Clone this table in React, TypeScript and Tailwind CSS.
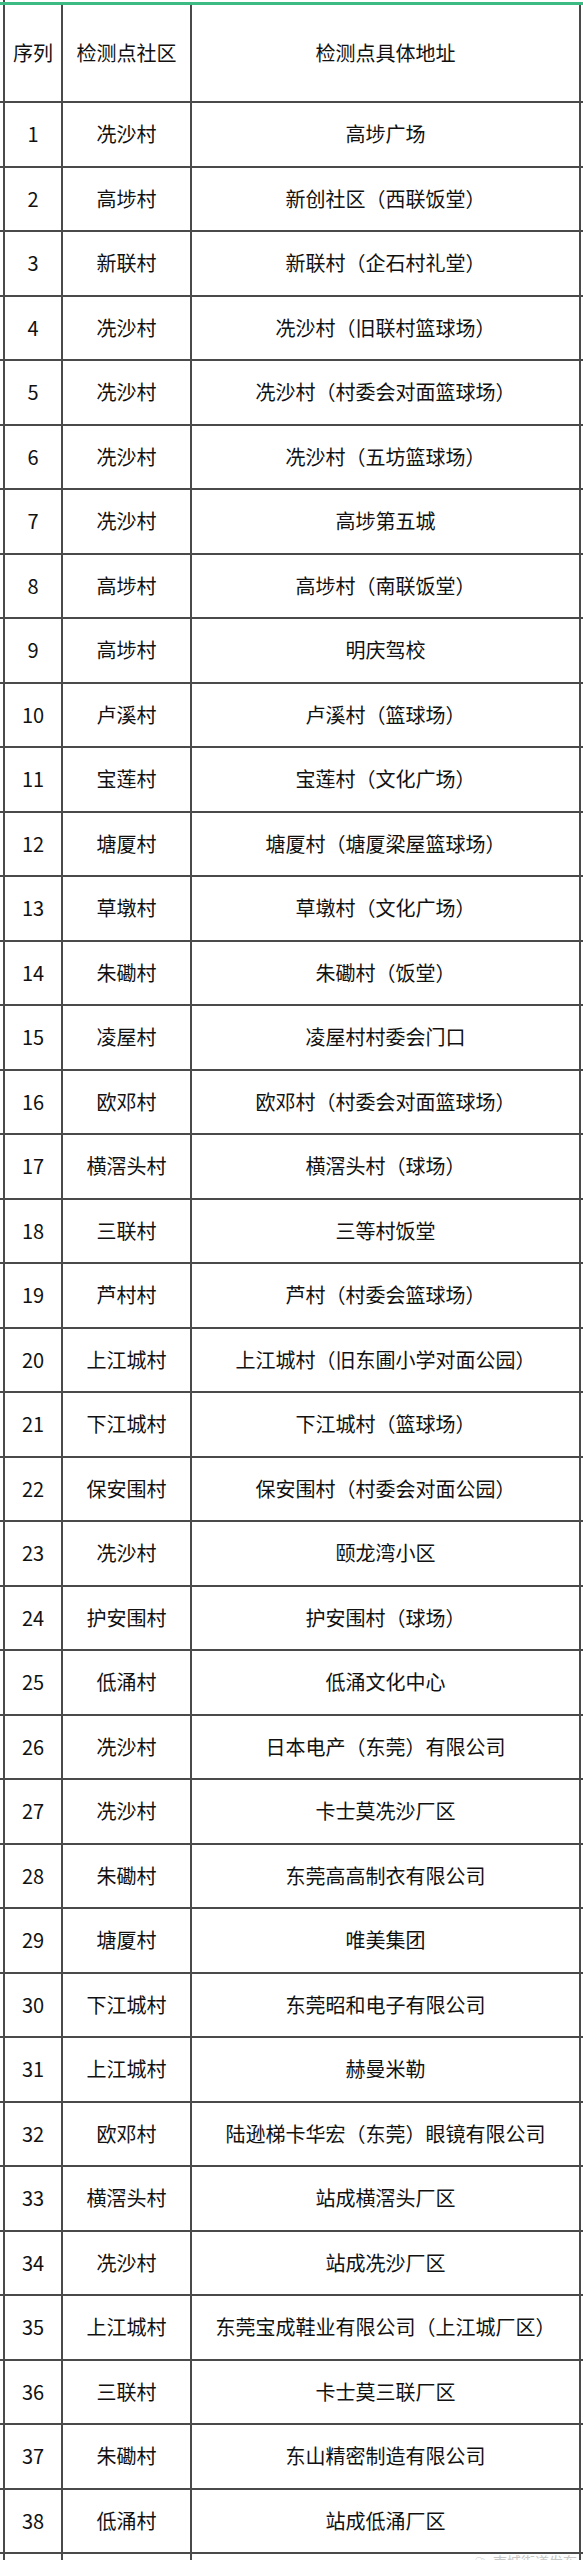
import React from "react";

const rows: [string, string, string][] = [
  ["1", "冼沙村", "高埗广场"],
  ["2", "高埗村", "新创社区（西联饭堂）"],
  ["3", "新联村", "新联村（企石村礼堂）"],
  ["4", "冼沙村", "冼沙村（旧联村篮球场）"],
  ["5", "冼沙村", "冼沙村（村委会对面篮球场）"],
  ["6", "冼沙村", "冼沙村（五坊篮球场）"],
  ["7", "冼沙村", "高埗第五城"],
  ["8", "高埗村", "高埗村（南联饭堂）"],
  ["9", "高埗村", "明庆驾校"],
  ["10", "卢溪村", "卢溪村（篮球场）"],
  ["11", "宝莲村", "宝莲村（文化广场）"],
  ["12", "塘厦村", "塘厦村（塘厦梁屋篮球场）"],
  ["13", "草墩村", "草墩村（文化广场）"],
  ["14", "朱磡村", "朱磡村（饭堂）"],
  ["15", "凌屋村", "凌屋村村委会门口"],
  ["16", "欧邓村", "欧邓村（村委会对面篮球场）"],
  ["17", "横滘头村", "横滘头村（球场）"],
  ["18", "三联村", "三等村饭堂"],
  ["19", "芦村村", "芦村（村委会篮球场）"],
  ["20", "上江城村", "上江城村（旧东圃小学对面公园）"],
  ["21", "下江城村", "下江城村（篮球场）"],
  ["22", "保安围村", "保安围村（村委会对面公园）"],
  ["23", "冼沙村", "颐龙湾小区"],
  ["24", "护安围村", "护安围村（球场）"],
  ["25", "低涌村", "低涌文化中心"],
  ["26", "冼沙村", "日本电产（东莞）有限公司"],
  ["27", "冼沙村", "卡士莫冼沙厂区"],
  ["28", "朱磡村", "东莞高高制衣有限公司"],
  ["29", "塘厦村", "唯美集团"],
  ["30", "下江城村", "东莞昭和电子有限公司"],
  ["31", "上江城村", "赫曼米勒"],
  ["32", "欧邓村", "陆逊梯卡华宏（东莞）眼镜有限公司"],
  ["33", "横滘头村", "站成横滘头厂区"],
  ["34", "冼沙村", "站成冼沙厂区"],
  ["35", "上江城村", "东莞宝成鞋业有限公司（上江城厂区）"],
  ["36", "三联村", "卡士莫三联厂区"],
  ["37", "朱磡村", "东山精密制造有限公司"],
  ["38", "低涌村", "站成低涌厂区"],
];

function Row({
  a,
  b,
  c,
  h,
  border = true,
}: {
  a: string;
  b: string;
  c: string;
  h: string;
  border?: boolean;
}) {
  return (
    <div
      className={`flex w-full ${h} ${
        border ? "border-b-2 border-[#4a4a4a]" : ""
      }`}
    >
      <div className="w-[3px] shrink-0" />
      <div className="flex w-[58px] shrink-0 items-center justify-center whitespace-nowrap border-l-2 border-[#4a4a4a]">
        {a}
      </div>
      <div className="flex w-[129px] shrink-0 items-center justify-center whitespace-nowrap border-l-2 border-[#4a4a4a]">
        {b}
      </div>
      <div className="flex w-[391px] shrink-0 items-center justify-center whitespace-nowrap border-x-2 border-[#4a4a4a]">
        {c}
      </div>
      <div className="w-[2px] shrink-0" />
    </div>
  );
}

export default function App() {
  return (
    <div
      className="relative h-[2560px] w-[583px] overflow-hidden bg-white text-[20px] leading-normal text-[#111111]"
      style={{ fontFamily: '"Noto Sans CJK SC", "Noto Sans", sans-serif' }}
    >
      <div className="flex h-[2px] w-full">
        <div className="w-[3px] shrink-0" />
        <div className="w-[2px] shrink-0 bg-[#4a4a4a]" />
      </div>
      <div className="h-[3px] w-full bg-[#3dbb85]" />
      <Row a="序列" b="检测点社区" c="检测点具体地址" h="h-[98px]" />
      {rows.map((r) => (
        <Row key={r[0]} a={r[0]} b={r[1]} c={r[2]} h="h-[64.5px]" />
      ))}
      <div className="relative">
        <Row a="" b="" c="" h="h-[10px]" border={false} />
        <div className="absolute right-[6px] top-[0px] flex items-center gap-[6px] text-[14px] leading-none text-[#c8c8c8]">
          <span>☁</span>
          <span>南城街道发布</span>
        </div>
      </div>
    </div>
  );
}
